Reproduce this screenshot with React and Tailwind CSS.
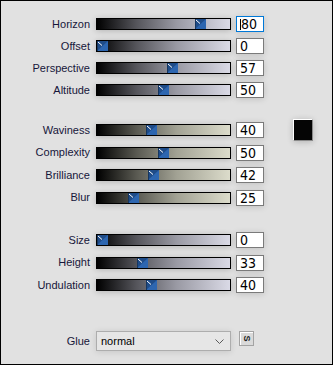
import React from 'react';

const groups = [
  {
    rows: [
      { label: 'Horizon', value: 80, h: 'h-[22px]', focused: true },
      { label: 'Offset', value: 0, h: 'h-[22px]' },
      { label: 'Perspective', value: 57, h: 'h-[22px]' },
      { label: 'Altitude', value: 50, h: 'h-[22px]' },
    ],
    track: 'bg-[linear-gradient(to_right,#000000,#56565c_30%,#9a9aa4_60%,#dadae6)]',
    mt: 'mt-[12px]',
  },
  {
    rows: [
      { label: 'Waviness', value: 40, h: 'h-[22px]' },
      { label: 'Complexity', value: 50, h: 'h-[23px]' },
      { label: 'Brilliance', value: 42, h: 'h-[22px]' },
      { label: 'Blur', value: 25, h: 'h-[23px]' },
    ],
    track: 'bg-[linear-gradient(to_right,#000000,#5a5a52_30%,#a2a294_60%,#dcdccb)]',
    mt: 'mt-[18px]',
    swatch: true,
  },
  {
    rows: [
      { label: 'Size', value: 0, h: 'h-[22px]' },
      { label: 'Height', value: 33, h: 'h-[23px]' },
      { label: 'Undulation', value: 40, h: 'h-[22px]' },
    ],
    track: 'bg-[linear-gradient(to_right,#000000,#56565c_30%,#9a9aa4_60%,#dadae6)]',
    mt: 'mt-[20px]',
  },
];

const Thumb = () => (
  <svg width="11" height="10" viewBox="0 0 11 10" className="block">
    <rect x="0" y="0" width="11" height="10" fill="#1f4c88" />
    <polygon points="11,0 11,10 0,10" fill="#2d66b0" />
    <line x1="1" y1="1" x2="5" y2="4.5" stroke="#ffffff" strokeWidth="1" />
    <line x1="0.5" y1="0" x2="0.5" y2="10" stroke="#16365f" strokeWidth="1" />
  </svg>
);

const SliderRow = ({ label, value, h, focused, track }) => (
  <div className={`flex items-center ${h}`}>
    <div className="w-[89px] text-right text-[11px] leading-none text-[#16163a]">{label}</div>
    <div className={`relative ml-[6px] w-[135px] h-[12px] border border-black shadow-[0_1px_6px_rgba(0,0,0,0.2)] ${track}`}>
      <div className="absolute top-0" style={{ left: (value / 100) * 122 }}>
        <Thumb />
      </div>
    </div>
    <div
      className={`relative ml-[5px] w-[28px] h-[16px] bg-white border flex items-center pl-[3px] text-[14px] leading-none text-black font-['Liberation_Sans_Narrow','DejaVu_Sans_Condensed',sans-serif] shadow-[0_1px_6px_rgba(0,0,0,0.15)] ${
        focused ? 'border-[#0078d7]' : 'border-[#7a7a7a]'
      }`}
    >
      {focused && <span className="absolute left-[3px] top-[2px] w-px h-[11px] bg-black" />}
      <span className={focused ? 'ml-[1px]' : ''}>{value}</span>
    </div>
  </div>
);

export default function App() {
  return (
    <div className="w-[333px] h-[365px] border border-black bg-[#e1e1e1] font-['Liberation_Sans',Arial,sans-serif] overflow-hidden">
      {groups.map((g, i) => (
        <div key={i} className={`flex items-start ${g.mt}`}>
          <div className="flex flex-col">
            {g.rows.map((r) => (
              <SliderRow key={r.label} {...r} track={g.track} />
            ))}
          </div>
          {g.swatch && (
            <div className="ml-[29px] w-[20px] h-[22px] bg-[#050505] border border-t-white border-l-white border-r-[#8a8a8a] border-b-[#8a8a8a] shadow-[0_1px_6px_rgba(0,0,0,0.2)]" />
          )}
        </div>
      ))}

      <div className="flex items-start mt-[35px]">
        <div className="w-[89px] h-[20px] flex items-center justify-end text-[11px] leading-none text-[#16163a]">Glue</div>
        <div className="ml-[6px] w-[135px] h-[20px] border border-[#adadad] bg-[#e6e6e6] flex items-center justify-between pl-[4px] pr-[6px] text-[11px] text-black shadow-[0_1px_6px_rgba(0,0,0,0.12)]">
          <span>normal</span>
          <svg width="9" height="5" viewBox="0 0 9 5" className="block">
            <polyline points="0.5,0.5 4.5,4.5 8.5,0.5" fill="none" stroke="#5a5a5a" strokeWidth="1" />
          </svg>
        </div>
        <div className="ml-[8px] w-[15px] h-[15px] border border-[#a3a3a3] bg-[#dadada] flex items-center justify-center shadow-[inset_1px_1px_0_#ffffff]">
          <span className="inline-block rotate-90 text-[9px] font-bold leading-none text-[#222]">S</span>
        </div>
      </div>
    </div>
  );
}
